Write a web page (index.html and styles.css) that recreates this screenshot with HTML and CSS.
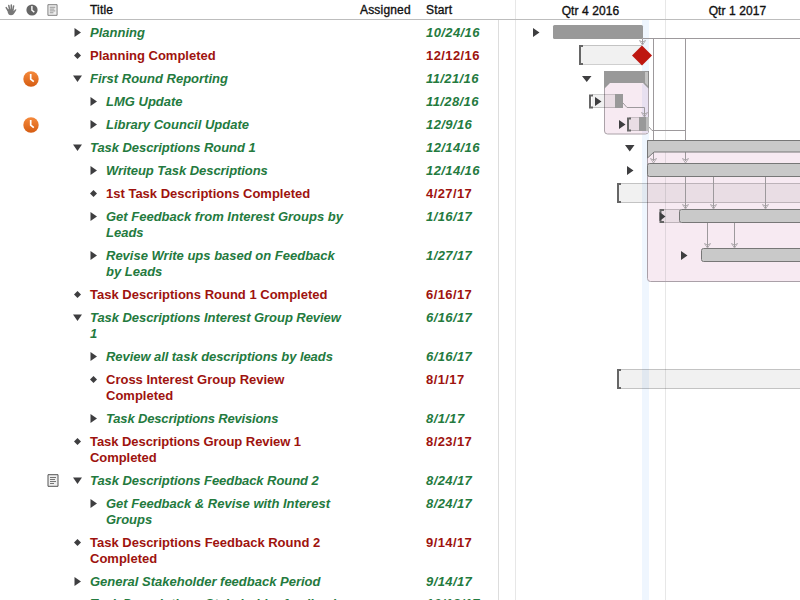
FILE: index.html
```
<!DOCTYPE html>
<html lang="en">
<head>
<meta charset="utf-8">
<title>Project plan</title>
<link rel="stylesheet" href="styles.css">
</head>
<body>
<svg class="defs" aria-hidden="true">
  <symbol id="right" viewBox="0 0 9 9"><path d="M1.500 0v9L8 4.500z"/></symbol>
  <symbol id="down" viewBox="0 0 9 9"><path d="M0 1.500h9L4.500 8z"/></symbol>
  <symbol id="dot" viewBox="0 0 9 9"><path d="M4.500 1L8 4.500 4.500 8 1 4.500z"/></symbol>
  <symbol id="note" viewBox="0 0 12 13"><path d="M1 .7h10v11.600H1z" fill="#eee" stroke="currentColor"/><path d="M3 3.500h6M3 5.500h5M3 7.500h6M3 9.500h4" stroke="currentColor" stroke-width=".8"/></symbol>
  <symbol id="arrow" viewBox="-4 -6 8 7" overflow="visible"><path d="M-3-4.500L0 0 3-4.500M-3-4.500L0-3 3-4.500" fill="none" stroke="#aaa6a9" stroke-width=".9"/></symbol>
</svg>
<main class="app">
  <section class="outline">
    <header class="head">
      <span class="cell"><svg width="12" height="12" viewBox="0 0 12 12"><path d="M3 6.500L1.200 3.600M4.600 5.500L3.800 1.600M6.300 5.500V.9M7.900 5.700L8.600 1.900" fill="none" stroke="#777" stroke-width="1.500" stroke-linecap="round"/><path d="M2.300 5.300h6.300v2l1.500-1.800q1-.5 1.400.2L9.300 9.300Q8.500 11.300 6 11.300 3.500 11.300 2.900 9z" fill="#777"/></svg></span>
      <span class="cell"><svg width="12" height="12" viewBox="0 0 12 12"><circle cx="6" cy="6" r="5.600" fill="#666"/><path d="M5.900 2v4.200l2.400 1.900" fill="none" stroke="#fff" stroke-width="1.400"/></svg></span>
      <span class="cell soft"><svg width="11" height="12"><use href="#note"/></svg></span>
      <span class="h-title">Title</span><span class="h-assigned">Assigned</span><span class="h-start">Start</span>
    </header>
    <div class="rows">
      <div class="row"><i></i><i></i><svg class="mark"><use href="#right"/></svg><b>Planning</b><time>10/24/16</time></div>
      <div class="row red"><i></i><i></i><svg class="mark"><use href="#dot"/></svg><b>Planning Completed</b><time>12/12/16</time></div>
      <div class="row"><i class="clock"><svg width="16" height="16" viewBox="0 0 16 16"><circle cx="8" cy="8" r="7.700" fill="url(#orange)"/><path d="M7.700 3v5.200l3.100 2.500" fill="none" stroke="#fff" stroke-width="1.700"/></svg></i><i></i><svg class="mark"><use href="#down"/></svg><b>First Round Reporting</b><time>11/21/16</time></div>
      <div class="row sub"><i></i><i></i><svg class="mark"><use href="#right"/></svg><b>LMG Update</b><time>11/28/16</time></div>
      <div class="row sub"><i class="clock"><svg width="16" height="16" viewBox="0 0 16 16"><circle cx="8" cy="8" r="7.700" fill="url(#orange)"/><path d="M7.700 3v5.200l3.100 2.500" fill="none" stroke="#fff" stroke-width="1.700"/></svg></i><i></i><svg class="mark"><use href="#right"/></svg><b>Library Council Update</b><time>12/9/16</time></div>
      <div class="row"><i></i><i></i><svg class="mark"><use href="#down"/></svg><b class="tight">Task Descriptions Round 1</b><time>12/14/16</time></div>
      <div class="row sub"><i></i><i></i><svg class="mark"><use href="#right"/></svg><b class="tight">Writeup Task Descriptions</b><time>12/14/16</time></div>
      <div class="row sub red"><i></i><i></i><svg class="mark"><use href="#dot"/></svg><b>1st Task Descriptions Completed</b><time>4/27/17</time></div>
      <div class="row sub"><i></i><i></i><svg class="mark"><use href="#right"/></svg><b>Get Feedback from Interest Groups by<br>Leads</b><time>1/16/17</time></div>
      <div class="row sub"><i></i><i></i><svg class="mark"><use href="#right"/></svg><b>Revise Write ups based on Feedback<br>by Leads</b><time>1/27/17</time></div>
      <div class="row red"><i></i><i></i><svg class="mark"><use href="#dot"/></svg><b>Task Descriptions Round 1 Completed</b><time>6/16/17</time></div>
      <div class="row"><i></i><i></i><svg class="mark"><use href="#down"/></svg><b class="tight">Task Descriptions Interest Group Review<br>1</b><time>6/16/17</time></div>
      <div class="row sub"><i></i><i></i><svg class="mark"><use href="#right"/></svg><b class="tight">Review all task descriptions by leads</b><time>6/16/17</time></div>
      <div class="row sub red"><i></i><i></i><svg class="mark"><use href="#dot"/></svg><b>Cross Interest Group Review<br>Completed</b><time>8/1/17</time></div>
      <div class="row sub"><i></i><i></i><svg class="mark"><use href="#right"/></svg><b class="tighter">Task Descriptions Revisions</b><time>8/1/17</time></div>
      <div class="row red"><i></i><i></i><svg class="mark"><use href="#dot"/></svg><b class="tight">Task Descriptions Group Review 1<br>Completed</b><time>8/23/17</time></div>
      <div class="row"><i></i><i class="memo"><svg width="12" height="13"><use href="#note"/></svg></i><svg class="mark"><use href="#down"/></svg><b class="tight">Task Descriptions Feedback Round 2</b><time>8/24/17</time></div>
      <div class="row sub"><i></i><i></i><svg class="mark"><use href="#right"/></svg><b>Get Feedback &amp; Revise with Interest<br>Groups</b><time>8/24/17</time></div>
      <div class="row red"><i></i><i></i><svg class="mark"><use href="#dot"/></svg><b>Task Descriptions Feedback Round 2<br>Completed</b><time>9/14/17</time></div>
      <div class="row"><i></i><i></i><svg class="mark"><use href="#right"/></svg><b>General Stakeholder feedback Period</b><time>9/14/17</time></div>
      <div class="row last"><i></i><i></i><svg class="mark"><use href="#dot"/></svg><b>Task Descriptions Stakeholder feedback</b><time>10/13/17</time></div>
    </div>
  </section>
  <section class="gantt">
    <header class="quarters"><span>Qtr 4 2016</span><span>Qtr 1 2017</span></header>
    <svg class="chart" width="302" height="580" viewBox="498 20 302 580">
      <defs><linearGradient id="orange" x1="0" y1="0" x2="0" y2="1"><stop offset="0" stop-color="#f58a3c"/><stop offset="1" stop-color="#d55c12"/></linearGradient></defs>
      <path d="M498.500 20v580" stroke="#ddd"/>
      <path d="M515.500 20v580M665.500 20v580" stroke="#e7e7e7"/>
      <path d="M642 20h7v580h-7z" fill="#eff6fe"/>
      <!-- group backgrounds -->
      <path d="M604.500 72v59q0 3 3 3h38q3 0 3-3V72z" fill="#f7eaf2" stroke="#aaa2a8"/>
      <path d="M642 84h6v49h-6z" fill="#e8e0f0"/>
      <path d="M802 140.500H647.500v138q0 3 3 3H802z" fill="#f7eaf2" stroke="#aaa0a8"/>
      <path d="M665.500 152v129" stroke="#dfd5dc"/>
      <!-- time windows -->
      <g fill="#000" fill-opacity=".055">
        <path d="M580 45h62v19h-62zM592 95h23v13h-23zM629 118h11v13h-11zM618 183h182v20H618zM661 209h19v14h-19zM618 369h182v20H618z"/>
      </g>
      <path d="M580 45.500h62M580 64.500h62M592 94.500h23M592 107.500h23M629 117.500h11M629 130.500h11M618 183.500h182M618 202.500h182M661 209.500h19M661 222.500h19M618 369.500h182M618 388.500h182" stroke="#000" stroke-opacity=".19"/>
      <!-- dependencies -->
      <path d="M642.500 38.500H800M653.500 38.500V140M685.500 38.500V140M649 127l3 3.500h33.500M623 103l4 4.500h17.500V117M642.500 39v5M653.500 152v9M685.500 152v9M685.500 177v31M713.500 177v31M765.500 177v31M707.500 262v-14M707.500 223v24M734.500 223v24" fill="none" stroke="#9d999c"/>
      <!-- bars -->
      <rect x="553" y="25" width="90" height="14" rx="1.500" fill="#999"/>
      <path d="M604 71h45v18l-6-6h-33l-6 6z" fill="#999"/><path d="M645 72h3v14l-3-3z" fill="#c4c4c4"/>
      <path d="M648.500 71v17" stroke="#888"/>
      <path d="M615 94h8v14h-8zM639 117h7v14h-7z" fill="#999"/><path d="M646 117h3v14h-3z" fill="#bdbdbd"/>
      <path d="M802 140.500H647.500v17.500l6.500-6h148z" fill="#c9c9c9" stroke="#777"/>
      <g fill="#c9c9c9" stroke="#777"><rect x="647.500" y="163.500" width="160" height="13" rx="2"/><rect x="679.500" y="209.500" width="130" height="13" rx="2"/><rect x="701.500" y="248.500" width="110" height="13" rx="2"/></g>
      <path d="M583 46h-3v18h3M593 95.500h-3v12h3M631 118.500h-3v12h3M621 184h-3v18h3M664 210h-3.500v12h3.500M621 370h-3v18h3" fill="none" stroke="#666" stroke-width="2"/>
      <g><use href="#arrow" x="638.500" y="39" width="8" height="7"/><use href="#arrow" x="640.500" y="111" width="8" height="7"/><use href="#arrow" x="649.500" y="157" width="8" height="7"/><use href="#arrow" x="681.500" y="157" width="8" height="7"/><use href="#arrow" x="681.500" y="203" width="8" height="7"/><use href="#arrow" x="709.500" y="203" width="8" height="7"/><use href="#arrow" x="761.500" y="203" width="8" height="7"/><use href="#arrow" x="703.500" y="242" width="8" height="7"/><use href="#arrow" x="730.500" y="242" width="8" height="7"/></g>
      <path d="M642 45.500l10 10-10 10-10-10z" fill="#be1710"/>
      <path d="M533 28v9l6.500-4.500zM582 76h9.500l-4.750 6zM595 97v9l6.500-4.500zM619 120v9l6.500-4.500zM625 145h9.500l-4.750 6.500zM627 166v9l6.500-4.500zM659.500 212v9l6-4.500zM681 251v9l6.500-4.500z" fill="#3e3e40"/>
    </svg>
  </section>
</main>
</body>
</html>
```

FILE: styles.css
```
* { box-sizing: border-box; }
body { margin: 0; background: #fff; font-family: "Liberation Sans", Arial, sans-serif; font-size: 13px; }
.defs { position: absolute; width: 0; height: 0; }
.app { display: flex; width: 800px; height: 600px; overflow: hidden; }
.outline { width: 498px; height: 600px; overflow: hidden; }
.head { display: flex; align-items: center; height: 20px; border-bottom: 1px solid #bdbdbd; font-size: 12px; color: #111; -webkit-text-stroke: .35px #111; letter-spacing: .18px; }
.cell { display: flex; justify-content: center; width: 21px; height: 12px; -webkit-text-stroke: 0; }
.soft { color: #777; }
.h-title { width: 270px; padding-left: 27px; }
.h-assigned { width: 93px; padding-left: 27px; }
.h-start { width: 60px; }
.rows { padding-top: 1px; }
.row { display: grid; grid-template-columns: 42px 31px 17px 336px 1fr; padding: 4px 0 3px; line-height: 16px; color: #247a3e; font-style: italic; }
.row.sub { grid-template-columns: 42px 47px 17px 320px 1fr; }
.row.red { color: #9e130e; font-style: normal; }
.row.last { margin-top: -1px; }
.row i { display: block; height: 16px; }
.row .clock { padding-left: 23px; }
.row .clock svg, .row .memo svg { display: block; }
.row .memo { padding: 1px 0 0 5px; color: #555; }
.row b, .row time { font-weight: bold; white-space: nowrap; }
.row .tight { letter-spacing: -.06px; }
.row .tighter { letter-spacing: -.16px; }
.row time { letter-spacing: .4px; }
.mark { width: 9px; height: 9px; margin: 3px 0 0 0; fill: #3e3e40; }
.gantt { width: 302px; }
.quarters { display: grid; grid-template-columns: 150px 134px; height: 20px; padding: 2px 0 0 17px; border-bottom: 1px solid #bdbdbd; font-size: 12px; line-height: 18px; color: #111; -webkit-text-stroke: .35px #111; letter-spacing: .1px; }
.quarters span { height: 19px; margin-top: -2px; padding-top: 2px; border-left: 1px solid #e7e7e7; text-align: center; }
.quarters span + span { padding-left: 10px; }
.chart { display: block; }
```
